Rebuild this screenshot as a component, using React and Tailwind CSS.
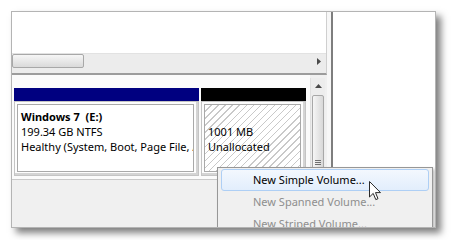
import React from "react";

const font = { fontFamily: '"Noto Sans", "Liberation Sans", sans-serif' };

function HScroll() {
  return (
    <div className="flex h-[15px] bg-[#ececec] border-t border-[#e2e2e2]">
      <div className="w-[72px] h-[14px] border border-[#a8a8a8] rounded-[2px] bg-gradient-to-b from-[#f6f6f6] to-[#dadada]" />
      <div className="flex-1" />
      <div className="w-[14px] flex items-center justify-center">
        <svg width="4" height="7" viewBox="0 0 4 7">
          <path d="M0 0 L4 3.5 L0 7 Z" fill="#4a4a4a" />
        </svg>
      </div>
    </div>
  );
}

function VScroll() {
  return (
    <div className="w-[15px] mt-[3px] flex flex-col bg-[#ededed] border-l border-[#e0e0e0]">
      <div className="h-[15px] flex items-center justify-center">
        <svg width="7" height="4" viewBox="0 0 7 4">
          <path d="M0 4 L3.5 0 L7 4 Z" fill="#4a4a4a" />
        </svg>
      </div>
      <div className="mx-[1px] mt-[2px] h-[140px] border border-[#a8a8a8] rounded-[2px] bg-gradient-to-r from-[#f6f6f6] to-[#d8d8d8] flex flex-col items-center pt-[64px] gap-[1px]">
        <div className="w-[6px] h-[1px] bg-[#707070]" />
        <div className="w-[6px] h-[1px] bg-[#707070]" />
        <div className="w-[6px] h-[1px] bg-[#707070]" />
      </div>
    </div>
  );
}

function Partition({ width, bar, hatched, lines, bold }) {
  return (
    <div className="flex flex-col" style={{ width }}>
      <div className={`h-[13px] ${bar}`} />
      <div className="h-[75px] border border-[#c4c4c4] bg-[#fdfdfd] pt-[2px] pl-[2px] pr-[4px] pb-[3px] shadow-[inset_-2px_-2px_0_#d4d4d4]">
        <div
          className={`h-full border border-[#a9a9a9] pl-[3px] overflow-hidden whitespace-pre text-[11px] leading-[15px] text-black ${
            hatched
              ? "pt-[19px] bg-[image:repeating-linear-gradient(135deg,#ffffff_0px,#ffffff_4px,#c9c9c9_4px,#c9c9c9_5px)]"
              : "pt-[4px] bg-white"
          }`}
        >
          {bold && <div className="font-bold">{bold}</div>}
          {lines.map((l) => (
            <div key={l}>{l}</div>
          ))}
        </div>
      </div>
    </div>
  );
}

function ContextMenu() {
  return (
    <div className="absolute left-[205px] top-[155px] w-[216px] h-[80px] border border-[#979797] bg-[#f0f0f0] pt-[1px] px-[3px] text-[11px] shadow-[2px_2px_3px_rgba(0,0,0,0.25)]">
      <div className="h-[22px] flex items-center pl-[31px] text-black border border-[#aecff5] rounded-[3px] bg-gradient-to-b from-[#f3f8fe] to-[#e2eefc]">
        New Simple Volume...
      </div>
      <div className="h-[22px] flex items-center pl-[32px] text-[#8e8e8e]">
        New Spanned Volume...
      </div>
      <div className="h-[22px] flex items-center pl-[32px] text-[#8e8e8e]">
        New Striped Volume...
      </div>
    </div>
  );
}

function Cursor() {
  return (
    <svg
      className="absolute left-[357px] top-[169px]"
      width="13"
      height="20"
      viewBox="0 0 13 20"
    >
      <path
        d="M0.5 0.5 L0.5 16 L4.2 12.4 L6.8 18.6 L9 17.7 L6.5 11.6 L11.5 11.6 Z"
        fill="#ffffff"
        stroke="#2a2a2a"
        strokeWidth="1"
        strokeLinejoin="round"
      />
    </svg>
  );
}

export default function App() {
  return (
    <div className="w-[452px] h-[240px] bg-white pl-[11px] pt-[11px]" style={font}>
      <div className="relative w-[425px] h-[217px] border border-[#b4b4b4] bg-white overflow-hidden shadow-[5px_5px_7px_rgba(0,0,0,0.5)] flex">
        {/* left pane */}
        <div className="w-[315px] flex flex-col">
          <div className="border-r border-[#cfcfcf] border-b-2 border-b-[#9c9c9c]">
            <div className="h-[41px] bg-white" />
            <HScroll />
            <div className="h-[5px] bg-[#ececec]" />
          </div>
          <div className="flex-1 flex bg-[#f0f0f0]">
            <div className="w-[298px] flex flex-col">
              <div className="bg-[#fbfbfb] pt-[13px] pl-[2px] pb-[3px] border-b border-[#c9c9c9] flex gap-[2px]">
                <Partition
                  width={185}
                  bar="bg-[#000080]"
                  bold="Windows 7  (E:)"
                  lines={["199.34 GB NTFS", "Healthy (System, Boot, Page File, Active, Crash Dump, Primary Partition)"]}
                />
                <Partition
                  width={105}
                  bar="bg-black"
                  hatched
                  lines={["1001 MB", "Unallocated"]}
                />
              </div>
            </div>
            <VScroll />
          </div>
        </div>
        <div className="w-[4px] bg-[#f7f7f7]" />
        <div className="w-[2px] bg-[#7e7e7e]" />
        <div className="flex-1 bg-white" />
        <ContextMenu />
        <Cursor />
      </div>
    </div>
  );
}
